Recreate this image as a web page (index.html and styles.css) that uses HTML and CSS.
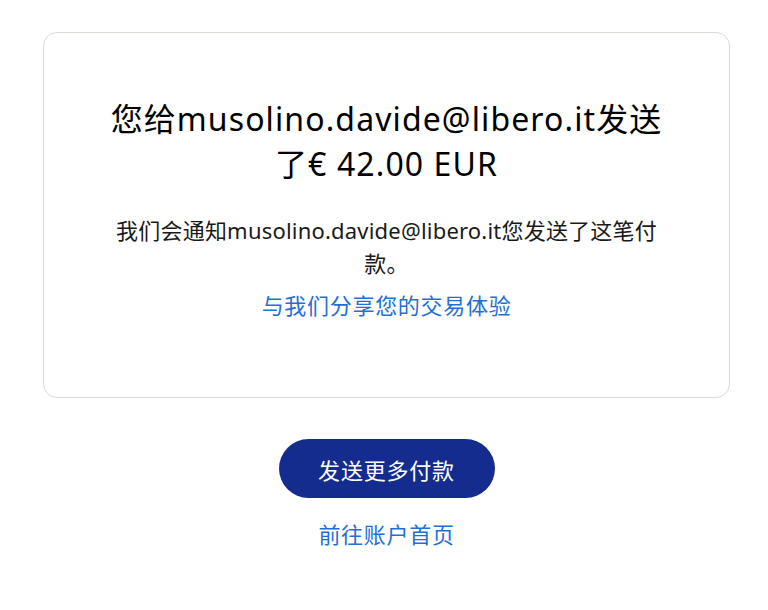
FILE: index.html
```html
<!DOCTYPE html>
<html lang="zh-CN">
<head>
  <meta charset="UTF-8" />
  <meta name="viewport" content="width=device-width, initial-scale=1.0" />
  <title>付款已发送</title>
  <link rel="stylesheet" href="styles.css">
</head>
<body>
  <main class="page">
    <section class="card">
      <h1 class="title">您给musolino.davide@libero.it发送了€ 42.00 EUR</h1>
      <p class="note">我们会通知musolino.davide@libero.it您发送了这笔付款。</p>
      <a class="link" href="#">与我们分享您的交易体验</a>
    </section>

    <div class="actions">
      <button class="primary">发送更多付款</button>
      <a class="link" href="#">前往账户首页</a>
    </div>
  </main>
</body>
</html>
```

FILE: styles.css
```css
body {
  margin: 0;
  background: #ffffff;
  font-family: 'Noto Sans', 'Noto Sans CJK SC', sans-serif;
  color: #000000;
}

.page {
  padding: 32px 38px 0 43px;
}

.card {
  border: 1px solid #dcdad3;
  border-radius: 14px;
  padding: 63px 65px 75px;
  text-align: center;
}

.title {
  margin: 0;
  font-size: 32px;
  font-weight: 400;
  line-height: 45px;
  letter-spacing: 1.1px;
}

.note {
  margin: 28px 0 9px;
  font-size: 22px;
  line-height: 33px;
  letter-spacing: 0.2px;
  color: #1a1a1a;
}

.link {
  display: block;
  font-size: 22px;
  line-height: 33px;
  letter-spacing: 0.7px;
  color: #1f6fd6;
  text-decoration: none;
}

.actions {
  display: flex;
  flex-direction: column;
  align-items: center;
  margin-top: 41px;
}

.primary {
  width: 216px;
  height: 59px;
  border: none;
  border-radius: 30px;
  background: #142c8e;
  color: #ffffff;
  font-family: inherit;
  font-size: 22px;
  letter-spacing: 0.8px;
  cursor: pointer;
}

.actions .link {
  margin-top: 20px;
}
```
